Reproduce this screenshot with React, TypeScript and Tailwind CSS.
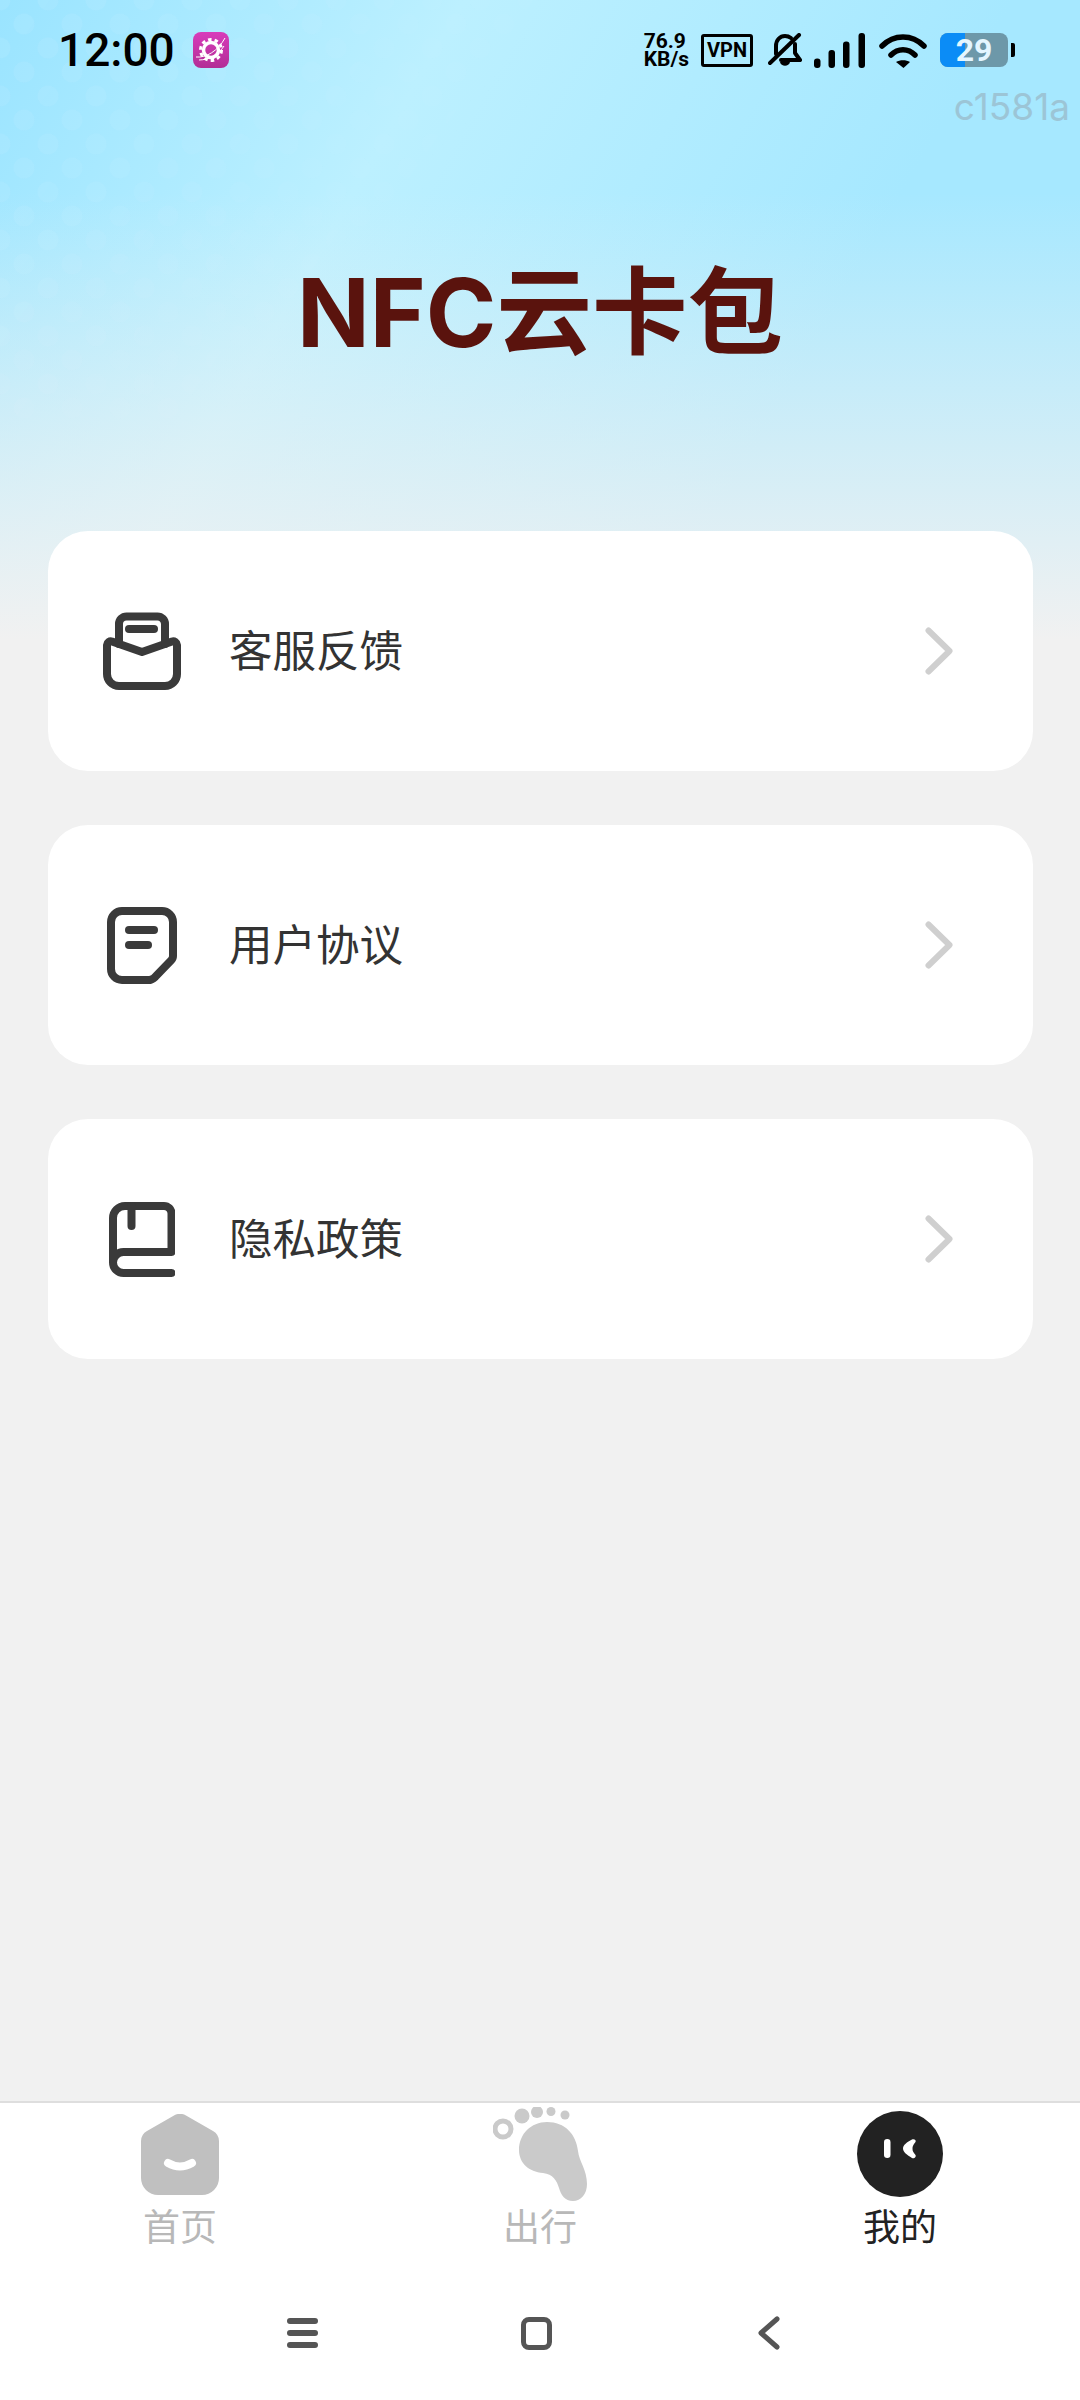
const rows = [
  { label: '客服反馈', icon: <MailIcon /> },
  { label: '用户协议', icon: <NoteIcon /> },
  { label: '隐私政策', icon: <BookIcon /> },
]

function MailIcon() {
  return (
    <svg width="78" height="78" viewBox="0 0 78 78" fill="none" stroke="#3a3a3a" strokeWidth="8" strokeLinejoin="round" strokeLinecap="round">
      <path d="M4 33a4 4 0 0 1 5-3.500L39 40l30-10.500a4 4 0 0 1 5 3.500V62a12 12 0 0 1-12 12H16a12 12 0 0 1-12-12Z" />
      <path d="M16 32V12a7.500 7.500 0 0 1 7.500-7.500h31A7.500 7.500 0 0 1 62 12v20" />
      <path d="M26 17h25" />
    </svg>
  )
}

function NoteIcon() {
  return (
    <svg width="70" height="77" viewBox="0 0 70 77" fill="none" stroke="#3a3a3a" strokeWidth="8" strokeLinejoin="round" strokeLinecap="round">
      <path d="M15 4h40a11 11 0 0 1 11 11v34a6 6 0 0 1-2 4.500L49 69a10 10 0 0 1-6 4H15a11 11 0 0 1-11-11V15A11 11 0 0 1 15 4Z" />
      <path d="M22 23h25" />
      <path d="M22 38h19" />
    </svg>
  )
}

function BookIcon() {
  return (
    <svg width="66" height="75" viewBox="0 0 66 75" fill="none" stroke="#3a3a3a" strokeWidth="8" strokeLinejoin="round" strokeLinecap="round">
      <path d="M4 60V16A12 12 0 0 1 16 4h39a7.500 7.500 0 0 1 7.500 7.500V50H14.500a10.500 10.500 0 0 0 0 21h48" />
      <path d="M22.500 4v20" />
    </svg>
  )
}

function Chevron() {
  return (
    <svg width="28" height="48" viewBox="0 0 28 48" fill="none" stroke="#cfcfcf" strokeWidth="6" strokeLinecap="round" strokeLinejoin="round">
      <path d="M3.500 3.500L24.500 24L3.500 44.500" />
    </svg>
  )
}

function HomeTab() {
  return (
    <svg width="78" height="81" viewBox="0 0 78 81">
      <path d="M33 1.500a12 12 0 0 1 12 0L72 17a12 12 0 0 1 6 10v37a17 17 0 0 1-17 17H17A17 17 0 0 1 0 64V27a12 12 0 0 1 6-10Z" fill="#c0c0c0" />
      <path d="M27 49q12 7 24 0" fill="none" stroke="#fff" strokeWidth="8" strokeLinecap="round" />
    </svg>
  )
}

function FootTab() {
  return (
    <svg width="94" height="94" viewBox="0 0 94 94" fill="#cacaca">
      <circle cx="10" cy="22" r="8" fill="none" stroke="#cacaca" strokeWidth="5" />
      <circle cx="29" cy="9" r="7.500" />
      <circle cx="44" cy="5" r="6" />
      <circle cx="58" cy="4.500" r="4.500" />
      <circle cx="72" cy="8" r="4.500" />
      <path d="M54 15C72 15 83 27 85 44C86 54 94 63 94 77C94 87 88 94 80 94C72 94 68 88 66 81C64 74 60 67 50 66C36 65 26 56 26 43C26 27 38 15 54 15Z" />
    </svg>
  )
}

function MeTab() {
  return (
    <svg width="86" height="86" viewBox="0 0 86 86">
      <circle cx="43" cy="43" r="43" fill="#222" />
      <rect x="27" y="28" width="6.500" height="19" rx="3.200" fill="#fff" />
      <path d="M55 28.500C57 27.500 59.500 29 58.500 31C56 34 55.500 35.500 55.500 37.500C55.500 40 56 41 58.500 44C59.500 46 57 48 55 47C50 44 46 41 46 37.500C46 34 50 31 55 28.500Z" fill="#fff" />
    </svg>
  )
}

function AppBadge() {
  return (
    <div className="w-[36px] h-[36px] rounded-[8px] bg-gradient-to-b from-[#d83cbb] to-[#b22e96] ml-[18px]">
      <svg width="36" height="36" viewBox="0 0 36 36" fill="none" stroke="#fff">
        <circle cx="18" cy="18" r="7.500" strokeWidth="3.500" />
        <circle cx="18" cy="18" r="10.500" strokeWidth="3" strokeDasharray="3.500 3.100" />
        <path d="M3 25c10 1 22-6 29-19" strokeWidth="1" />
        <path d="M6 28c10 0 20-6 25-14" strokeWidth="1" />
      </svg>
    </div>
  )
}

function BellOff() {
  return (
    <svg width="34" height="35" viewBox="0 0 34 35" fill="none" stroke="#000" strokeWidth="4" strokeLinecap="round" strokeLinejoin="round">
      <path d="M8 21V13C8 7 12 3 17 3C19 3 21 3.500 23 5" />
      <path d="M27 11V20L32 27H13" />
      <path d="M31 2L2 30" />
      <path d="M12 29C13 34 21 34 22 29Z" fill="#000" stroke="none" />
    </svg>
  )
}

function Signal() {
  return (
    <svg width="52" height="35" viewBox="0 0 52 35" fill="#000">
      <rect x="0" y="25.500" width="6.500" height="9.500" rx="3" />
      <rect x="14.500" y="17" width="6.500" height="18" rx="3" />
      <rect x="29" y="8.500" width="6.500" height="26.500" rx="3" />
      <rect x="44.500" y="0" width="6.500" height="35" rx="3" />
    </svg>
  )
}

function Wifi() {
  return (
    <svg width="48" height="35" viewBox="0 0 48 35" fill="none" stroke="#000" strokeWidth="5.500" strokeLinecap="round">
      <path d="M3 13C15 1 33 1 45 13" />
      <path d="M12 22C19 15 29 15 36 22" />
      <path d="M17 29C21 26.500 27 26.500 31 29L24.500 35Z" fill="#000" stroke="none" />
    </svg>
  )
}

function StatusBar() {
  return (
    <div className="relative flex items-center justify-between h-[100px] pl-[58px] pr-[65px]">
      <div className="flex items-center">
        <span className="font-['Roboto',sans-serif] font-medium text-[46px] leading-none text-black">12:00</span>
        <AppBadge />
      </div>
      <div className="flex items-center">
        <div className="font-['Roboto',sans-serif] font-bold text-[21px] leading-[18px] text-black">
          <div>76.9</div>
          <div>KB/s</div>
        </div>
        <div className="ml-[12px] flex items-center justify-center w-[52px] h-[33px] border-[3px] border-black rounded-[3px] font-['Roboto',sans-serif] font-bold text-[20px] leading-none text-black">
          VPN
        </div>
        <div className="ml-[15px]"><BellOff /></div>
        <div className="ml-[12px]"><Signal /></div>
        <div className="ml-[13px]"><Wifi /></div>
        <div className="ml-[13px] relative flex w-[68px] h-[34px] rounded-[8px] overflow-hidden bg-[#6d98a9]">
          <div className="w-[25px] bg-[#0b8cf6]" />
          <span className="absolute inset-0 flex items-center justify-center font-['Roboto',sans-serif] font-bold text-[32px] leading-none text-[#e4f6ff]">29</span>
        </div>
        <div className="ml-[3px] w-[4px] h-[14px] rounded-r-[2px] bg-black" />
      </div>
      <span className="absolute right-[10px] top-[87px] font-['Inter',sans-serif] text-[37px] leading-[40px] text-[#9cc5d6]">c1581a</span>
    </div>
  )
}

function MenuCard({ label, icon }: { label: string; icon: React.ReactNode }) {
  return (
    <div className="flex items-center h-[240px] rounded-[40px] bg-white pl-[55px] pr-[80px]">
      <div className="flex items-center justify-center w-[78px]">{icon}</div>
      <span className="ml-[48px] mb-[5px] flex-1 font-['Noto_Sans_CJK_SC',sans-serif] text-[43.500px] leading-none text-[#333]">{label}</span>
      <Chevron />
    </div>
  )
}

function Tab({ label, icon, active }: { label: string; icon: React.ReactNode; active?: boolean }) {
  return (
    <div className="flex flex-col items-center">
      <div className="flex items-center justify-center h-[98px]">{icon}</div>
      <span className={`font-['Noto_Sans_CJK_SC',sans-serif] text-[37px] leading-[44px] ${active ? 'text-[#222]' : 'text-[#b8b8b8]'}`}>{label}</span>
    </div>
  )
}

export default function App() {
  return (
    <div className="relative flex flex-col w-[1080px] h-[2400px] bg-[#f1f1f1] overflow-hidden">
      {/* sky behind the header */}
      <div className="absolute inset-x-0 top-0 h-[640px] bg-[linear-gradient(to_bottom,rgba(241,241,241,0)_30%,#f1f1f1_100%),linear-gradient(120deg,#9ae4ff_0%,#bcf0ff_32%,#a6e8ff_70%)]" />
      <div className="absolute left-0 top-0 w-[700px] h-[420px] bg-[radial-gradient(circle,rgba(255,255,255,0.08)_10px,transparent_11px),radial-gradient(circle,rgba(255,255,255,0.08)_10px,transparent_11px)] bg-[size:48px_48px] bg-[position:0_0,24px_24px] [mask-image:linear-gradient(125deg,black,transparent_65%)]" />

      <div className="relative flex flex-col flex-1">
        <StatusBar />
        <div className="h-[431px] pt-[150px] text-center">
          <h1 className="font-['Inter','Noto_Sans_CJK_SC',sans-serif] font-bold text-[95.500px] leading-[124px] text-[#5a130d]">NFC云卡包</h1>
        </div>
        <div className="flex flex-col gap-[54px] pl-[48px] pr-[47px]">
          {rows.map((row) => (
            <MenuCard key={row.label} label={row.label} icon={row.icon} />
          ))}
        </div>
        <div className="flex-1" />
        <div className="h-[299px] bg-white border-t-2 border-[#dedede]">
          <div className="grid grid-cols-3 pt-[2px]">
            <Tab label="首页" icon={<HomeTab />} />
            <Tab label="出行" icon={<FootTab />} />
            <Tab label="我的" icon={<MeTab />} active />
          </div>
          {/* system nav */}
          <div className="flex items-center pl-[287px] mt-[69px]">
            <div className="flex flex-col gap-[6px] w-[31px]">
              <div className="h-[6px] rounded-full bg-[#555]" />
              <div className="h-[6px] rounded-full bg-[#555]" />
              <div className="h-[6px] rounded-full bg-[#555]" />
            </div>
            <div className="ml-[203px] w-[31px] h-[33px] border-[5px] border-[#555] rounded-[8px]" />
            <svg className="ml-[206px]" width="22" height="34" viewBox="0 0 22 34" fill="none" stroke="#555" strokeWidth="5" strokeLinecap="round" strokeLinejoin="round">
              <path d="M19 3L3 17L19 31" />
            </svg>
          </div>
        </div>
      </div>
    </div>
  )
}
